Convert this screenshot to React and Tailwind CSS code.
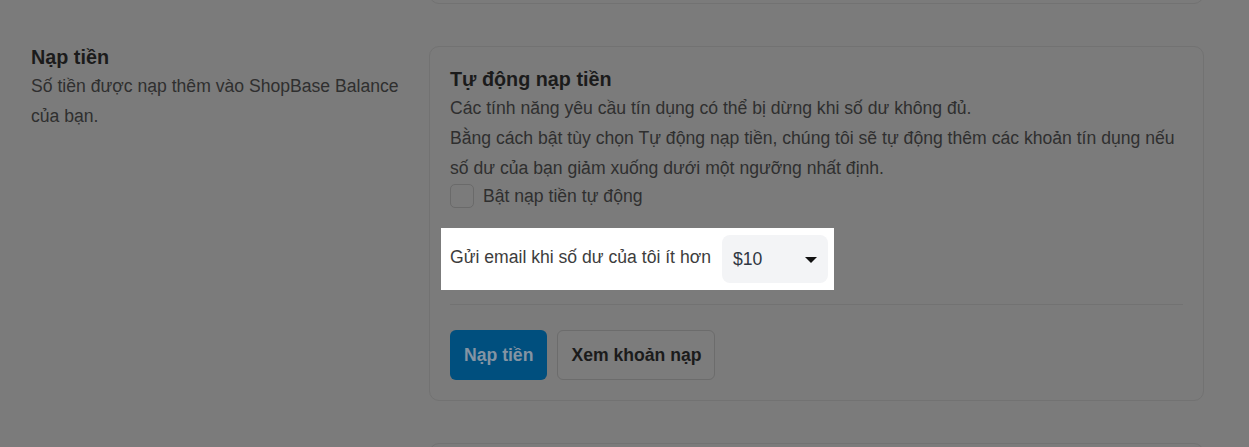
export default function App() {
  const font = { fontFamily: '"Liberation Sans", Arial, sans-serif' };
  return (
    <div className="w-[1249px] h-[447px] overflow-hidden bg-[#7b7b7b]" style={font}>
      {/* previous card remnant */}
      <div className="flex pl-[429px]">
        <div className="w-[775px] h-[60px] -mt-[56px] rounded-[10px] border border-[#727272]" />
      </div>

      <div className="flex pl-[31px] mt-[42px] gap-[26px]">
        <div className="w-[372px] shrink-0 -mt-[3px]">
          <div className="text-[19.8px] leading-[28px] font-bold text-[#1b1b1b]">Nạp tiền</div>
          <div className="text-[17.6px] leading-[30px] text-[#2f2f2f]">
            Số tiền được nạp thêm vào ShopBase Balance của bạn.
          </div>
        </div>

        <div className="w-[775px] rounded-[10px] border border-[#727272] px-[20px] pt-[18px] pb-[20px]">
          <div className="text-[19.8px] leading-[28px] font-bold text-[#1b1b1b]">Tự động nạp tiền</div>
          <div className="text-[17.6px] leading-[30px] text-[#2f2f2f]">
            <div>Các tính năng yêu cầu tín dụng có thể bị dừng khi số dư không đủ.</div>
            <div>
              Bằng cách bật tùy chọn Tự động nạp tiền, chúng tôi sẽ tự động thêm các khoản tín dụng nếu số dư của bạn giảm xuống dưới một ngưỡng nhất định.
            </div>
          </div>
          <label className="flex items-center gap-[9px] h-[24px] mt-[1px]">
            <span className="w-[24px] h-[24px] rounded-[5px] border border-[#6a6a6a] bg-[#7b7b7b]" />
            <span className="text-[17.6px] text-[#2f2f2f]">Bật nạp tiền tự động</span>
          </label>

          <div className="mt-[20px] -ml-[9px] w-fit bg-white flex items-center pl-[9px] pr-[6px] py-[7px]">
            <span className="text-[17.6px] text-[#3d3d3d] -mt-[3px]">Gửi email khi số dư của tôi ít hơn</span>
            <div className="ml-[11px] w-[106px] h-[48px] rounded-[8px] bg-[#f3f4f6] flex items-center justify-between pl-[11px] pr-[11px]">
              <span className="text-[17.6px] text-[#2f3742]">$10</span>
              <svg width="12" height="6" viewBox="0 0 12 6" className="mt-[2px]">
                <path d="M0 0 L12 0 L6 6 Z" fill="#111" />
              </svg>
            </div>
          </div>

          <div className="mt-[14px] h-px bg-[#727272]" />

          <div className="mt-[25px] flex gap-[10px]">
            <button className="h-[50px] px-[14px] rounded-[6px] bg-[#004f7e] text-[17.6px] font-bold text-[#8494a3]">
              Nạp tiền
            </button>
            <button className="h-[50px] px-[13px] rounded-[6px] border border-[#6c6c6c] bg-[#7c7c7c] text-[17.6px] font-bold text-[#1b1b1b]">
              Xem khoản nạp
            </button>
          </div>
        </div>
      </div>

      <div className="flex pl-[429px] mt-[42px]">
        <div className="w-[775px] h-[60px] rounded-[10px] border border-[#727272]" />
      </div>
    </div>
  );
}
